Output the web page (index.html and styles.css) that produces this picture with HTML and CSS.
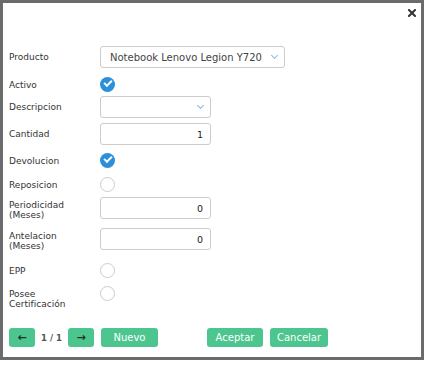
FILE: index.html
```html
<!DOCTYPE html>
<html lang="es">
<head>
    <meta charset="UTF-8">
    <meta name="viewport" content="width=device-width, initial-scale=1.0">
    <title>Producto</title>
    <link rel="stylesheet" href="styles.css">
</head>
<body>
    <div class="modal">
        <div class="modal-header">
            <button class="close" type="button" title="Cerrar">
                <svg width="8" height="8" viewBox="0 0 8 8">
                    <path d="M1 1L7 7M7 1L1 7" stroke="#333" stroke-width="2" stroke-linecap="square"/>
                </svg>
            </button>
        </div>

        <div class="modal-body">
            <div class="row row-input row-producto">
                <label>Producto</label>
                <div class="select wide">
                    <span class="select-text">Notebook Lenovo Legion Y720</span>
                    <span class="chevron"></span>
                </div>
            </div>

            <div class="row row-check gap-activo">
                <label>Activo</label>
                <span class="check checked"></span>
            </div>

            <div class="row row-input gap-desc">
                <label>Descripcion</label>
                <div class="select">
                    <span class="select-text"></span>
                    <span class="chevron"></span>
                </div>
            </div>

            <div class="row row-input gap-cant">
                <label>Cantidad</label>
                <div class="input">1</div>
            </div>

            <div class="row row-check gap-devo">
                <label>Devolucion</label>
                <span class="check checked"></span>
            </div>

            <div class="row row-check gap-repo">
                <label>Reposicion</label>
                <span class="check"></span>
            </div>

            <div class="row row-input row-two gap-perio">
                <label>Periodicidad<br>(Meses)</label>
                <div class="input">0</div>
            </div>

            <div class="row row-input row-two gap-ante">
                <label>Antelacion<br>(Meses)</label>
                <div class="input">0</div>
            </div>

            <div class="row row-check gap-epp">
                <label>EPP</label>
                <span class="check"></span>
            </div>

            <div class="row row-check row-two gap-posee">
                <label>Posee<br>Certificación</label>
                <span class="check"></span>
            </div>
        </div>

        <div class="modal-footer">
            <button class="btn btn-icon" type="button">&#8592;</button>
            <span class="pager">1 / 1</span>
            <button class="btn btn-icon" type="button">&#8594;</button>
            <button class="btn btn-nuevo" type="button">Nuevo</button>
            <button class="btn btn-aceptar" type="button">Aceptar</button>
            <button class="btn btn-cancelar" type="button">Cancelar</button>
        </div>
    </div>
</body>
</html>
```

FILE: styles.css
```css
body {
    font-family: "DejaVu Sans", Verdana, sans-serif;
    font-size: 9px;
    color: #333;
    background-color: #fff;
    margin: 0;
    padding: 0;
}

.modal {
    width: 418px;
    height: 354px;
    border: 3px solid #6b6b6b;
    background-color: #fff;
}

.modal-header {
    display: flex;
    justify-content: flex-end;
    height: 43px;
    padding: 6px 5px 0 0;
    box-sizing: border-box;
}

.close {
    border: none;
    background: none;
    padding: 0;
    width: 8px;
    height: 8px;
    line-height: 0;
}

.modal-body {
    padding-left: 6px;
}

.row {
    display: flex;
    align-items: center;
}

.row label {
    width: 91px;
    flex: none;
    line-height: 10px;
}

.row-input {
    height: 22px;
}

.row-check {
    height: 15px;
}

.row-two {
    align-items: flex-start;
}

.row-two label {
    padding-top: 3px;
}

.gap-activo { margin-top: 9px; }
.gap-desc { margin-top: 4px; }
.gap-cant { margin-top: 5px; }
.gap-devo { margin-top: 8px; }
.gap-repo { margin-top: 9px; }
.gap-perio { margin-top: 5px; }
.gap-ante { margin-top: 9px; }
.gap-epp { margin-top: 13px; }
.gap-posee { margin-top: 8px; }

.select, .input {
    width: 111px;
    height: 22px;
    box-sizing: border-box;
    border: 1px solid #ccc;
    border-radius: 3px;
    background-color: #fff;
    display: flex;
    align-items: center;
}

.select.wide {
    width: 185px;
}

.select-text {
    flex: 1;
    padding-left: 9px;
    font-size: 10px;
    color: #444;
    white-space: nowrap;
}

.chevron {
    width: 4px;
    height: 4px;
    border-right: 1px solid #8fb6e0;
    border-bottom: 1px solid #8fb6e0;
    transform: rotate(45deg);
    margin: 0 7px 3px 0;
}

.input {
    justify-content: flex-end;
    padding-right: 7px;
    font-size: 9.5px;
    color: #222;
}

.check {
    width: 15px;
    height: 15px;
    box-sizing: border-box;
    border: 1px solid #ccc;
    border-radius: 50%;
    position: relative;
}

.check.checked {
    border: none;
    background-color: #2b8fd9;
}

.check.checked::after {
    content: "";
    position: absolute;
    left: 4px;
    top: 3px;
    width: 6px;
    height: 3px;
    border-left: 2px solid #fff;
    border-bottom: 2px solid #fff;
    transform: rotate(-45deg);
}

.modal-footer {
    display: flex;
    align-items: center;
    padding-left: 6px;
    margin-top: 27px;
}

.btn {
    height: 19px;
    border: none;
    border-radius: 3px;
    background-color: #4cc58f;
    color: #fff;
    font-family: "DejaVu Sans", Verdana, sans-serif;
    font-size: 10px;
    padding: 0;
}

.btn-icon {
    width: 26px;
    color: #22302a;
    font-size: 11px;
    font-weight: bold;
}

.pager {
    width: 33px;
    text-align: center;
    color: #555;
    font-weight: bold;
    font-size: 8.5px;
}

.btn-nuevo {
    width: 57px;
    margin-left: 7px;
}

.btn-aceptar {
    width: 56px;
    margin-left: 49px;
}

.btn-cancelar {
    width: 58px;
    margin-left: 7px;
}
```
